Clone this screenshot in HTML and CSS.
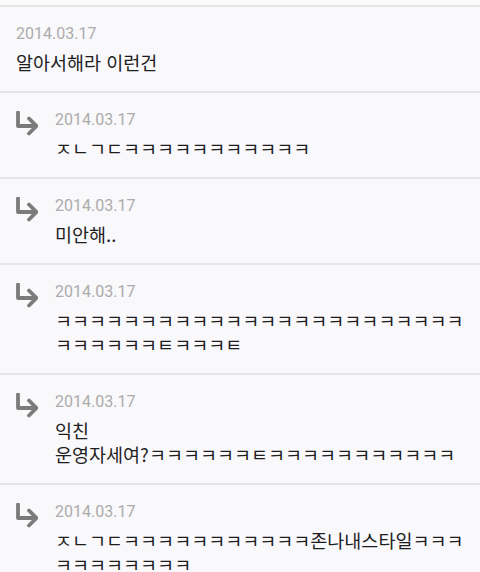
FILE: index.html
```html
<!DOCTYPE html>
<html lang="ko">
<head>
<meta charset="utf-8">
<link rel="stylesheet" href="styles.css">
</head>
<body>
<div class="list">
  <div class="item">
    <div class="body">
      <div class="date">2014.03.17</div>
      <div class="msg">알아서해라 이런건</div>
    </div>
  </div>
  <div class="item reply">
    <svg class="arrow" viewBox="0 0 24 26" width="24" height="26"><path d="M4 1.5 V15 H22.5 M15 7.5 L22.5 15 L15 22.5"/></svg>
    <div class="body">
      <div class="date">2014.03.17</div>
      <div class="msg">ㅈㄴㄱㄷㅋㅋㅋㅋㅋㅋㅋㅋㅋㅋㅋ</div>
    </div>
  </div>
  <div class="item reply">
    <svg class="arrow" viewBox="0 0 24 26" width="24" height="26"><path d="M4 1.5 V15 H22.5 M15 7.5 L22.5 15 L15 22.5"/></svg>
    <div class="body">
      <div class="date">2014.03.17</div>
      <div class="msg">미안해..</div>
    </div>
  </div>
  <div class="item reply">
    <svg class="arrow" viewBox="0 0 24 26" width="24" height="26"><path d="M4 1.5 V15 H22.5 M15 7.5 L22.5 15 L15 22.5"/></svg>
    <div class="body">
      <div class="date">2014.03.17</div>
      <div class="msg">ㅋㅋㅋㅋㅋㅋㅋㅋㅋㅋㅋㅋㅋㅋㅋㅋㅋㅋㅋㅋㅋㅋㅋㅋㅋㅋㅋㅋㅋㅋㅌㅋㅋㅋㅌ</div>
    </div>
  </div>
  <div class="item reply">
    <svg class="arrow" viewBox="0 0 24 26" width="24" height="26"><path d="M4 1.5 V15 H22.5 M15 7.5 L22.5 15 L15 22.5"/></svg>
    <div class="body">
      <div class="date">2014.03.17</div>
      <div class="msg">익친<br>운영자세여?ㅋㅋㅋㅋㅋㅋㅌㅋㅋㅋㅋㅋㅋㅋㅋㅋㅋㅋ</div>
    </div>
  </div>
  <div class="item reply">
    <svg class="arrow" viewBox="0 0 24 26" width="24" height="26"><path d="M4 1.5 V15 H22.5 M15 7.5 L22.5 15 L15 22.5"/></svg>
    <div class="body">
      <div class="date">2014.03.17</div>
      <div class="msg">ㅈㄴㄱㄷㅋㅋㅋㅋㅋㅋㅋㅋㅋㅋㅋ존나내스타일ㅋㅋㅋㅋㅋㅋㅋㅋㅋㅋㅋ</div>
    </div>
  </div>
</div>
</body>
</html>
```

FILE: styles.css
```css
html, body {
  margin: 0;
  padding: 0;
}
body {
  width: 480px;
  height: 572px;
  overflow: hidden;
  background: #fbfbfc;
  padding-top: 5px;
  box-sizing: border-box;
}
.list {
  background: #f9f8fb;
}
.item {
  display: flex;
  align-items: flex-start;
  border-top: 2px solid #e6e5e8;
  padding: 17px 8px 17px 16px;
}
.reply {
  padding-left: 14px;
}
.arrow {
  flex: none;
  margin-top: 1px;
  margin-right: 17px;
  fill: none;
  stroke: #7b7b7b;
  stroke-width: 3.8;
  stroke-linecap: round;
  stroke-linejoin: round;
}
.body {
  flex: 1;
  min-width: 0;
}
.date {
  font-family: Roboto, "Noto Sans", sans-serif;
  font-size: 16px;
  line-height: 20px;
  color: #acacac;
  margin-bottom: 6px;
}
.msg {
  font-family: "Noto Sans CJK KR", Roboto, sans-serif;
  font-size: 18.5px;
  line-height: 24px;
  color: #1e1e1e;
}
```
